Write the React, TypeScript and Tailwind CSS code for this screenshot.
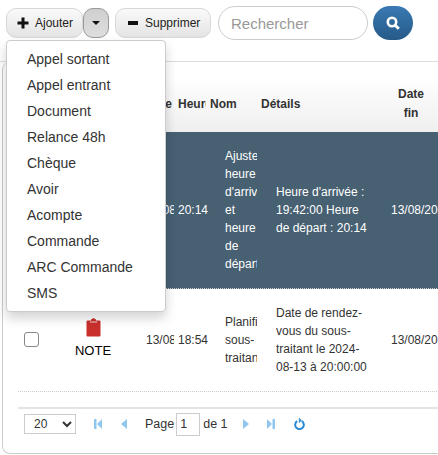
import React from 'react';

const menuItems = ["Appel sortant", "Appel entrant", "Document", "Relance 48h", "Chèque", "Avoir", "Acompte", "Commande", "ARC Commande", "SMS"];

const btn = "h-[30px] rounded-[10px] border border-[#d8d8d8] bg-gradient-to-b from-[#fafafa] to-[#e4e4e4] flex items-center text-[12px] text-[#222]";

const PagerIcon = ({ d }: { d: string }) => (
    <svg className="block" width="8" height="10" viewBox="0 0 8 10" fill="#8fc7f0"><path d={d} /></svg>
);

export default function App() {
    return (
        <div className="relative w-[438px] h-[455px] overflow-hidden bg-white font-['Liberation_Sans',Arial,sans-serif] text-[#333]">
            {/* toolbar */}
            <div className="flex items-center h-[62px] border-b border-[#ddd] pl-[6px] pb-[21px] pt-[6px]">
                <button className={btn + " w-[77px] pl-[10px] gap-[6px]"}>
                    <svg width="12" height="12" viewBox="0 0 12 12" fill="#111"><path d="M4.5 0.5h3v4h4v3h-4v4h-3v-4h-4v-3h4z" /></svg>
                    Ajouter
                </button>
                <button className="h-[30px] w-[26px] rounded-[10px] border border-[#999] bg-gradient-to-b from-[#cfcfcf] to-[#dedede] flex items-center justify-center">
                    <span className="block w-0 h-0 border-x-[4px] border-x-transparent border-t-[4px] border-t-[#111]"></span>
                </button>
                <button className={btn + " w-[96px] ml-[6px] pl-[12px] gap-[7px]"}>
                    <svg width="10" height="4" viewBox="0 0 10 4" fill="#111"><rect width="10" height="4" /></svg>
                    Supprimer
                </button>
                <input placeholder="Rechercher" className="ml-[7px] w-[150px] h-[34px] rounded-[17px] border border-[#ccc] px-[12px] text-[15px] outline-none placeholder:text-[#999]" />
                <button className="ml-[5px] w-[40px] h-[34px] rounded-[17px] bg-gradient-to-b from-[#3a7ab3] to-[#265a88] flex items-center justify-center">
                    <svg width="16" height="16" viewBox="0 0 16 16" fill="none" stroke="#fff"><circle cx="7" cy="7" r="4.2" strokeWidth="2.6" /><path d="M10.2 10.2l3.6 3.6" strokeWidth="3" /></svg>
                </button>
            </div>

            {/* grid */}
            <div className="ml-[2px] -mr-[20px] h-[392px] rounded-[8px] border border-[#ccc] border-t-0 overflow-hidden pt-[14px]">
                <div className="ml-[15px]">
                    <div className="flex items-center h-[56px] bg-gradient-to-b from-white to-[#efefef] text-[12px] font-bold text-[#333] whitespace-nowrap">
                        <div className="w-[128px] shrink-0"></div>
                        <div className="w-[26px] shrink-0 overflow-hidden flex justify-end">Date</div>
                        <div className="w-[28px] ml-[6px] shrink-0 overflow-hidden">Heure</div>
                        <div className="w-[51px] ml-[4px] shrink-0">Nom</div>
                        <div className="w-[130px] shrink-0">Détails</div>
                        <div className="w-[40px] shrink-0 text-center leading-[19px] whitespace-normal">Date fin</div>
                    </div>
                    <div className="flex items-center h-[157px] bg-[#476072] text-white text-[12px] leading-[18px] border-b border-dotted border-[#ccc]">
                        <div className="w-[128px] shrink-0"></div>
                        <div className="w-[28px] shrink-0 overflow-hidden whitespace-nowrap">13/08</div>
                        <div className="w-[31px] ml-[4px] shrink-0 overflow-hidden">20:14</div>
                        <div className="w-[32px] ml-[16px] shrink-0 overflow-hidden">Ajuster heure d'arrivée et heure de départ</div>
                        <div className="w-[96px] ml-[19px] shrink-0">Heure d'arrivée : 19:42:00 Heure de départ : 20:14</div>
                        <div className="ml-[19px] whitespace-nowrap">13/08/2024</div>
                    </div>
                    <div className="flex h-[103px] text-[12px] leading-[18px] border-b border-dotted border-[#ccc]">
                        <div className="w-[40px] shrink-0 pl-[6px] pt-[43px]">
                            <input type="checkbox" className="block w-[15px] h-[15px] appearance-none rounded-[3px] border border-[#888] bg-white" />
                        </div>
                        <div className="w-[70px] shrink-0 flex flex-col items-center pt-[29px] text-[13px] text-black">
                            <svg width="15" height="19" viewBox="0 0 15 19"><path d="M1.5 2.5h3.5v-1l2.5-1.5 2.5 1.5v1h3.5a1 1 0 0 1 1 1v14a1 1 0 0 1-1 1h-12a1 1 0 0 1-1-1v-14a1 1 0 0 1 1-1z" fill="#c9302c" /><rect x="4" y="3.5" width="7" height="1" fill="#f4d0cf" /></svg>
                            <span className="mt-[5px] leading-[18px]">NOTE</span>
                        </div>
                        <div className="ml-[18px] w-[28px] shrink-0 overflow-hidden whitespace-nowrap pt-[42px]">13/08</div>
                        <div className="ml-[4px] w-[31px] shrink-0 overflow-hidden pt-[42px]">18:54</div>
                        <div className="ml-[16px] w-[32px] shrink-0 overflow-hidden pt-[24px]">Planifié sous-traitant</div>
                        <div className="ml-[19px] w-[96px] shrink-0 pt-[15px]">Date de rendez-vous du sous-traitant le 2024-08-13 à 20:00:00</div>
                        <div className="ml-[19px] whitespace-nowrap pt-[42px]">13/08/2024</div>
                    </div>

                    {/* pager */}
                    <div className="flex items-center mt-[15px] h-[46px] border-t-2 border-[#e4e4e4] text-[12.5px] pb-[14px]">
                        <select className="ml-[6px] w-[52px] h-[20px] border border-[#ccc] bg-white text-[12px] pl-[5px]" defaultValue="20">
                            <option>20</option>
                        </select>
                        <div className="ml-[18px]"><PagerIcon d="M0 0h2.5v10h-2.5zM8 0v10l-5-5z" /></div>
                        <div className="ml-[19px]"><PagerIcon d="M6 0v10l-6-5z" /></div>
                        <span className="ml-[16px]">Page</span>
                        <input defaultValue="1" className="ml-[2px] w-[24px] h-[23px] border border-[#ccc] pl-[3px] text-[12.5px] outline-none" />
                        <span className="ml-[3px]">de 1</span>
                        <div className="ml-[15px]"><PagerIcon d="M0 0v10l6-5z" /></div>
                        <div className="ml-[16px]"><PagerIcon d="M0 0v10l5-5zM5.5 0h2.5v10h-2.5z" /></div>
                        <svg className="ml-[19px]" width="11" height="12" viewBox="0 0 11 12" fill="none" stroke="#2a8ad4" strokeWidth="2"><path d="M3.2 3.2a4.3 4.3 0 1 0 4.6 0" /><path d="M5.2 0.2v4.4l2.4-2.2z" fill="#2a8ad4" strokeWidth="0.6" /></svg>
                    </div>
                </div>
            </div>

            {/* dropdown */}
            <div className="absolute left-[6px] top-[40px] w-[160px] h-[272px] rounded-[4px] border border-[#ccc] bg-white shadow-[0_6px_12px_rgba(0,0,0,0.175)] pt-[5px]">
                {menuItems.map((item) => (
                    <div key={item} className="h-[26px] pl-[20px] text-[14px] leading-[26px] text-[#333]">{item}</div>
                ))}
            </div>
        </div>
    );
}
